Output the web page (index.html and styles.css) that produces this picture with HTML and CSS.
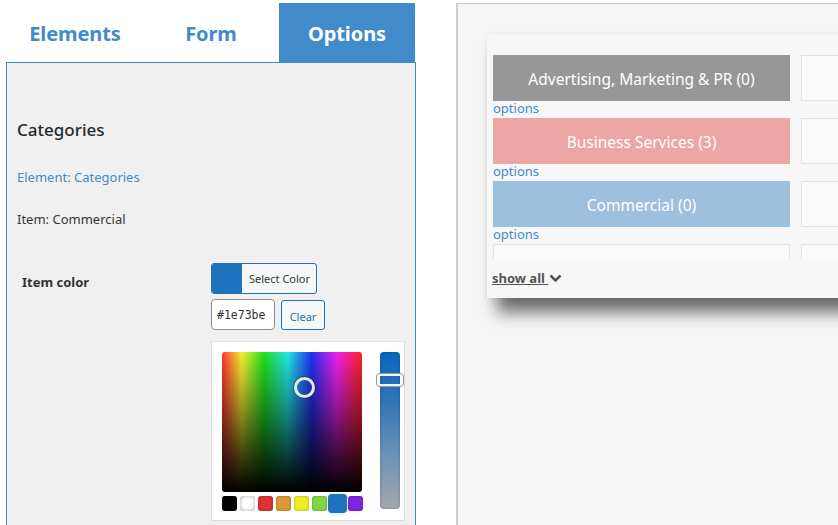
FILE: index.html
```html
<!DOCTYPE html>
<html>
<head>
<meta charset="utf-8">
<link rel="stylesheet" href="styles.css">
</head>
<body>
<div class="page">
  <div class="left">
    <div class="tabs">
      <div class="tab">Elements</div>
      <div class="tab">Form</div>
      <div class="tab active">Options</div>
    </div>
    <div class="panel">
      <h3 class="title">Categories</h3>
      <a class="crumb">Element: Categories</a>
      <div class="item-name">Item: Commercial</div>
      <div class="field">
        <div class="label">Item color</div>
        <div class="control">
          <button class="select-color"><span class="chip"></span><span class="sc-text">Select Color</span></button>
          <div class="input-row">
            <input class="hex" type="text" value="#1e73be">
            <button class="clear">Clear</button>
          </div>
          <div class="picker">
            <div class="picker-main">
              <div class="square">
                <span class="ring"></span>
              </div>
              <div class="swatches">
                <span class="sw sw-black"></span>
                <span class="sw sw-white"></span>
                <span class="sw sw-red"></span>
                <span class="sw sw-orange"></span>
                <span class="sw sw-yellow"></span>
                <span class="sw sw-green"></span>
                <span class="sw sw-blue selected"></span>
                <span class="sw sw-purple"></span>
              </div>
            </div>
            <div class="slider"><span class="handle"></span></div>
          </div>
        </div>
      </div>
    </div>
  </div>
  <div class="right">
    <div class="card">
      <div class="grid-clip">
        <div class="grid">
          <div class="cell">
            <div class="cat cat-gray">Advertising, Marketing &amp; PR (0)</div>
            <a class="opt">options</a>
          </div>
          <div class="cell"><div class="cat cat-empty"></div></div>
          <div class="cell">
            <div class="cat cat-pink">Business Services (3)</div>
            <a class="opt">options</a>
          </div>
          <div class="cell"><div class="cat cat-empty"></div></div>
          <div class="cell">
            <div class="cat cat-blue">Commercial (0)</div>
            <a class="opt">options</a>
          </div>
          <div class="cell"><div class="cat cat-empty"></div></div>
          <div class="cell"><div class="cat cat-empty"></div></div>
          <div class="cell"><div class="cat cat-empty"></div></div>
        </div>
      </div>
      <div class="footer">
        <a class="show-all">show all </a>
        <svg class="chev" width="13" height="9" viewBox="0 0 13 9"><path d="M1.5 1.5 L6.5 6.5 L11.5 1.5" fill="none" stroke="#555" stroke-width="2.6"/></svg>
      </div>
    </div>
  </div>
</div>
</body>
</html>
```

FILE: styles.css
```css
html, body {
  margin: 0;
  padding: 0;
  background: #fff;
  font-family: "Noto Sans", "Open Sans", sans-serif;
  overflow: hidden;
}
.page {
  display: flex;
  width: 838px;
  height: 525px;
  overflow: hidden;
}
.left {
  width: 410px;
  height: 560px;
  margin-left: 6px;
  flex: none;
  display: flex;
  flex-direction: column;
}
.tabs {
  display: flex;
  margin-top: 3px;
  padding-left: 1px;
  height: 59px;
}
.tab {
  width: 136px;
  display: flex;
  align-items: center;
  justify-content: center;
  font-weight: 700;
  font-size: 20px;
  color: #428bca;
  letter-spacing: -0.1px;
  padding-top: 2px;
  box-sizing: border-box;
}
.tab.active {
  background: #428bca;
  color: #fff;
}
.panel {
  flex: 1;
  border: 1px solid #428bca;
  background: #f0f0f0;
  padding: 55px 0 0 10px;
}
.title {
  margin: 0;
  font-size: 17px;
  font-weight: 500;
  line-height: 24px;
  color: #23282d;
}
.crumb {
  display: block;
  margin-top: 26px;
  font-size: 13px;
  line-height: 18px;
  color: #428bca;
}
.item-name {
  margin-top: 24px;
  font-size: 13px;
  line-height: 18px;
  color: #32373c;
}
.field {
  display: grid;
  grid-template-columns: 194px 1fr;
  margin-top: 35px;
}
.label {
  padding-left: 5px;
  padding-top: 10px;
  font-size: 13px;
  font-weight: 700;
  color: #333;
}
.control {
  display: flex;
  flex-direction: column;
  align-items: flex-start;
}
.select-color {
  display: flex;
  height: 31px;
  padding: 0;
  border: 1px solid #2271b1;
  border-radius: 3px;
  background: #f6f7f7;
  overflow: hidden;
  cursor: pointer;
}
.chip {
  width: 30px;
  height: 100%;
  background: #1e73be;
}
.sc-text {
  padding: 0 6px 0 7px;
  font-family: "Noto Sans", sans-serif;
  font-size: 11px;
  line-height: 29px;
  color: #32373c;
}
.input-row {
  display: flex;
  gap: 6px;
  margin-top: 5px;
}
.hex {
  width: 64px;
  height: 31px;
  box-sizing: border-box;
  border: 1px solid #8c8f94;
  border-radius: 4px;
  padding: 0 5px;
  font-family: "DejaVu Sans Mono", "Liberation Mono", monospace;
  font-size: 11.5px;
  color: #2c3338;
  background: #fff;
}
.clear {
  width: 44px;
  height: 30px;
  margin-top: 1px;
  padding: 0;
  border: 1px solid #2271b1;
  border-radius: 3px;
  background: #f6f7f7;
  font-family: "Noto Sans", sans-serif;
  font-size: 11px;
  color: #2271b1;
  padding-top: 2px;
}
.picker {
  margin-top: 11px;
  width: 194px;
  height: 180px;
  box-sizing: border-box;
  border: 1px solid #dcdcde;
  background: #fff;
  display: flex;
  padding: 10px 0 0 10px;
  gap: 18px;
}
.picker-main {
  width: 140px;
  flex: none;
  display: flex;
  flex-direction: column;
  gap: 2px;
}
.square {
  position: relative;
  width: 140px;
  height: 140px;
  border-radius: 3px;
  background:
    linear-gradient(to bottom, rgba(0,0,0,0) 0%, rgba(0,0,0,0.4) 42%, #000 100%),
    linear-gradient(to right, #f33 0%, #f8f030 14%, #1fe01f 30%, #22e6e6 47%, #2030f0 64%, #f020f0 82%, #f22 100%);
}
.ring {
  position: absolute;
  left: 72px;
  top: 25px;
  width: 15px;
  height: 15px;
  border: 3px solid #e8e8e8;
  border-radius: 50%;
  box-shadow: 0 0 0 1px rgba(0,0,0,0.2);
}
.swatches {
  display: flex;
  align-items: center;
  height: 18px;
}
.sw {
  flex: none;
  width: 15px;
  height: 15px;
  border-radius: 3px;
  margin-right: 3px;
  box-shadow: inset 0 0 3px rgba(0,0,0,0.3);
}
.sw:last-child { margin-right: 0; }
.sw-black { background: #000; }
.sw-white { background: #fff; box-shadow: inset 0 0 4px rgba(0,0,0,0.35); }
.sw-red { background: #dd3333; }
.sw-orange { background: #dd9933; }
.sw-yellow { background: #eeee22; }
.sw-green { background: #81d742; }
.sw-blue { background: #1e73be; }
.sw-purple { background: #8224e3; }
.sw.selected {
  width: 17px;
  height: 17px;
  margin-left: -1px;
  margin-right: 2px;
  box-shadow: 0 0 0 1px #1e73be, 0 0 3px rgba(30,115,190,0.8);
}
.slider {
  flex: none;
  position: relative;
  width: 20px;
  height: 157px;
  border-radius: 4px;
  background: linear-gradient(to bottom, #0866c0 0%, #2e74b8 30%, #6a92b8 65%, #a4a8ac 100%);
  box-shadow: inset 0 0 3px rgba(0,0,0,0.25);
}
.handle {
  position: absolute;
  left: -3px;
  top: 22px;
  width: 22px;
  height: 8px;
  border: 2px solid #f4f4f4;
  border-radius: 3px;
  box-shadow: 0 0 0 1px #999;
}
.right {
  flex: 1;
  margin-left: 40px;
  margin-top: 3px;
  border-top: 1px solid #ccc;
  border-left: 2px solid #ccc;
  background: #f6f6f6;
  min-width: 0;
}
.card {
  margin: 30px 0 0 29px;
  width: 420px;
  height: 264px;
  background: #f7f7f7;
  box-shadow: 10px 14px 16px rgba(0,0,0,0.58), 0 0 3px rgba(0,0,0,0.06);
  display: flex;
  flex-direction: column;
}
.grid-clip {
  height: 225px;
  overflow: hidden;
  padding: 21px 0 0 6px;
  box-sizing: border-box;
}
.grid {
  display: grid;
  grid-template-columns: 297px 297px;
  column-gap: 11px;
}
.cell {
  height: 63px;
  display: flex;
  flex-direction: column;
}
.cat {
  height: 46px;
  box-sizing: border-box;
  display: flex;
  align-items: center;
  justify-content: center;
  color: #fff;
  font-size: 15.5px;
  padding-top: 2px;
}
.cat-gray { background: #979797; }
.cat-pink { background: #eca6a6; }
.cat-blue { background: #9ec0df; }
.cat-empty { background: #fafafa; border: 1px solid #e3e3e3; }
.opt {
  font-size: 13px;
  line-height: 15px;
  color: #428bca;
}
.footer {
  flex: 1;
  display: flex;
  align-items: center;
  padding-left: 5px;
  padding-bottom: 2px;
  gap: 1px;
}
.show-all {
  font-size: 13px;
  font-weight: 700;
  color: #555;
  text-decoration: underline;
  white-space: pre;
}
.chev { margin-top: 2px; }
```
